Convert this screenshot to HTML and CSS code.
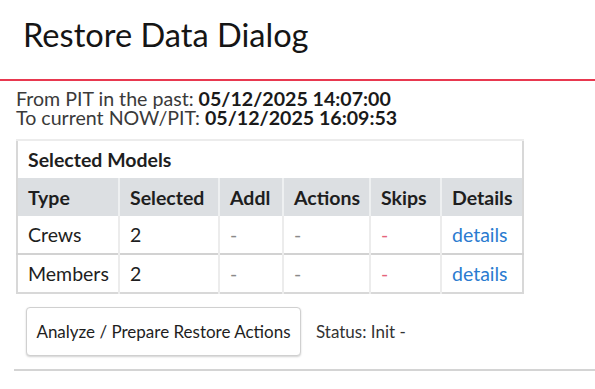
FILE: index.html
```html
<!DOCTYPE html>
<html lang="en">
<head>
    <meta charset="UTF-8">
    <title>Restore Data Dialog</title>
    <link rel="stylesheet" href="styles.css">
</head>
<body>
    <div class="dialog-header">
        <h1>Restore Data Dialog</h1>
    </div>

    <div class="dialog-body">
        <div class="pit-info">
            <div>From PIT in the past: <b>05/12/2025 14:07:00</b></div>
            <div>To current NOW/PIT: <b>05/12/2025 16:09:53</b></div>
        </div>

        <table class="models">
            <colgroup>
                <col class="col-type">
                <col class="col-sel">
                <col class="col-addl">
                <col class="col-act">
                <col class="col-skip">
                <col class="col-det">
            </colgroup>
            <thead>
                <tr>
                    <th colspan="6" class="caption">Selected Models</th>
                </tr>
                <tr class="head-row">
                    <th>Type</th>
                    <th>Selected</th>
                    <th>Addl</th>
                    <th>Actions</th>
                    <th>Skips</th>
                    <th>Details</th>
                </tr>
            </thead>
            <tbody>
                <tr>
                    <td>Crews</td>
                    <td>2</td>
                    <td class="dash">-</td>
                    <td class="dash">-</td>
                    <td class="dash skip">-</td>
                    <td><a href="#">details</a></td>
                </tr>
                <tr>
                    <td>Members</td>
                    <td>2</td>
                    <td class="dash">-</td>
                    <td class="dash">-</td>
                    <td class="dash skip">-</td>
                    <td><a href="#">details</a></td>
                </tr>
            </tbody>
        </table>

        <div class="actions-row">
            <button class="analyze-button">Analyze / Prepare Restore Actions</button>
            <span class="status">Status: Init -</span>
        </div>

        <div class="footer-line"></div>
    </div>
</body>
</html>
```

FILE: styles.css
```css
body {
    margin: 0;
    background-color: #ffffff;
    font-family: 'Lato', 'Open Sans', sans-serif;
    color: #1e1e1e;
}
.dialog-header {
    height: 79px;
    border-bottom: 2px solid #e8384f;
    padding-left: 23px;
}
.dialog-header h1 {
    margin: 0;
    padding-top: 15px;
    font-size: 32.6px;
    font-weight: 400;
    color: #151515;
}
.dialog-body {
    padding: 8px 0 0 15px;
}
.pit-info {
    padding-left: 1px;
    font-size: 19.6px;
    line-height: 19px;
    color: #3a3a3a;
}
.pit-info b {
    color: #1a1a1a;
}
.models {
    margin-top: 12px;
    margin-left: 1px;
    width: 506px;
    table-layout: fixed;
    border-collapse: collapse;
    border: 2px solid #d8d8d8;
    font-size: 19.5px;
}
.col-type { width: 102px; }
.col-sel { width: 100px; }
.col-addl { width: 64px; }
.col-act { width: 87px; }
.col-skip { width: 71px; }
.col-det { width: 82px; }
.models th, .models td {
    text-align: left;
    padding: 0 0 0 10px;
    white-space: nowrap;
}
.models th.caption {
    height: 37px;
    font-weight: bold;
    background-color: #ffffff;
    border-top: 2px solid #ececec;
}
.head-row th {
    background-color: #dcdfe2;
    height: 38px;
    font-weight: bold;
    border-left: 2px solid #eef0f1;
}
.head-row th:first-child {
    border-left: none;
}
.models td {
    height: 37px;
    border-left: 2px solid #ececec;
    border-top: 2px solid #d2d2d2;
}
.models td:first-child {
    border-left: none;
}
.models tbody tr:first-child td {
    border-top: none;
}
.dash {
    color: #8a8a8a;
}
.dash.skip {
    color: #e5647c;
}
.models a {
    color: #2a7bd0;
    text-decoration: none;
}
.actions-row {
    display: flex;
    align-items: center;
    gap: 15px;
    margin-top: 13px;
    margin-left: 11px;
}
.analyze-button {
    font-family: 'Lato', 'Open Sans', sans-serif;
    font-size: 17px;
    color: #1e1e1e;
    background-color: #ffffff;
    border: 1px solid #d0d0d0;
    border-radius: 4px;
    box-shadow: 0 1px 2px rgba(0, 0, 0, 0.18);
    width: 275px;
    height: 49px;
    padding: 0;
}
.status {
    font-size: 17px;
    color: #333;
}
.footer-line {
    height: 2px;
    background-color: #d4d4d4;
    margin-top: 13px;
    margin-left: -1px;
}
```
